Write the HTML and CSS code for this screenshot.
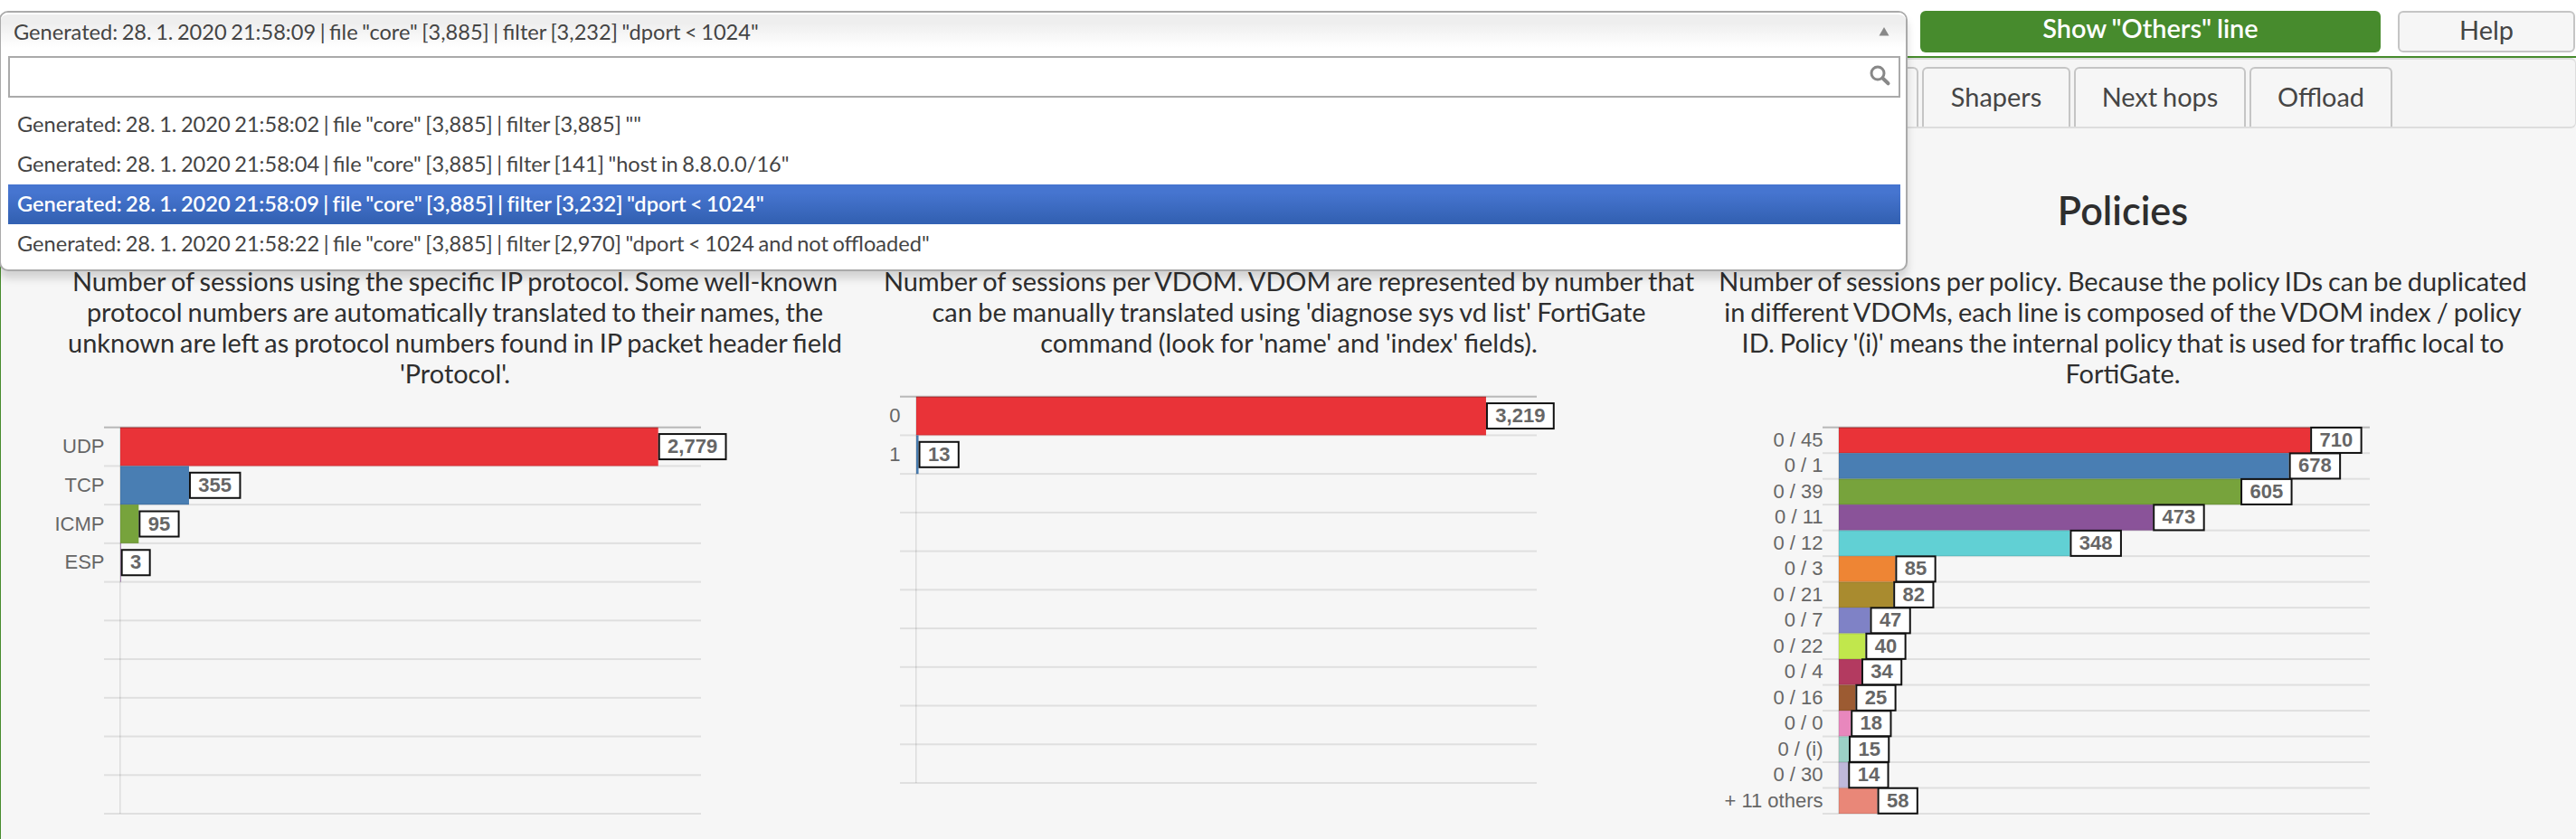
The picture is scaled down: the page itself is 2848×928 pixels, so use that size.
FILE: index.html
```html
<!DOCTYPE html>
<html lang="en">
<head>
<meta charset="utf-8">
<title>Session statistics</title>
<link rel="stylesheet" href="styles.css">
</head>
<body>
<header class="toolbar">
  <div class="chooser">
    <div class="chooser-head"><span>Generated: 28. 1. 2020 21:58:09 | file "core" [3,885] | filter [3,232] "dport &lt; 1024"</span>
      <svg class="arrow" width="12" height="10" viewBox="0 0 12 10"><path d="M0.5 9.5 L6 0 L11.5 9.5Z" fill="#888"/></svg>
    </div>
    <div class="chooser-drop">
      <div class="search">
        <svg width="24" height="24" viewBox="0 0 24 24" fill="none" stroke="#888"><circle cx="9" cy="9" r="7" stroke-width="3"/><path d="M14.5 14.5 L20.5 20.3" stroke-width="4" stroke-linecap="round"/></svg>
      </div>
      <ul class="results">
        <li>Generated: 28. 1. 2020 21:58:02 | file "core" [3,885] | filter [3,885] ""</li>
        <li>Generated: 28. 1. 2020 21:58:04 | file "core" [3,885] | filter [141] "host in 8.8.0.0/16"</li>
        <li class="active">Generated: 28. 1. 2020 21:58:09 | file "core" [3,885] | filter [3,232] "dport &lt; 1024"</li>
        <li>Generated: 28. 1. 2020 21:58:22 | file "core" [3,885] | filter [2,970] "dport &lt; 1024 and not offloaded"</li>
      </ul>
    </div>
  </div>
  <div class="btn btn-primary">Show "Others" line</div>
  <div class="btn btn-help">Help</div>
</header>
<main class="panel">
  <nav class="tabs">
    <span class="tab tab-rest"></span>
    <span class="tab tab-shapers">Shapers</span>
    <span class="tab tab-hops">Next hops</span>
    <span class="tab tab-offload">Offload</span>
  </nav>
  <div class="columns">
    <section class="column">
      <h2></h2>
      <p>Number of sessions using the specific IP protocol. Some well-known<br>protocol numbers are automatically translated to their names, the<br>unknown are left as protocol numbers found in IP packet header field<br>'Protocol'.</p>
      <svg class="chart" id="protocols"></svg>
    </section>
    <section class="column column-vdoms">
      <h2></h2>
      <p>Number of sessions per VDOM. VDOM are represented by number that<br>can be manually translated using 'diagnose sys vd list' FortiGate<br>command (look for 'name' and 'index' fields).</p>
      <svg class="chart" id="vdoms"></svg>
    </section>
    <section class="column">
      <h2>Policies</h2>
      <p>Number of sessions per policy. Because the policy IDs can be duplicated<br>in different VDOMs, each line is composed of the VDOM index / policy<br>ID. Policy '(i)' means the internal policy that is used for traffic local to<br>FortiGate.</p>
      <svg class="chart" id="policies"></svg>
    </section>
  </div>
</main>
<script src="charts.js"></script>
</body>
</html>
```
FILE: styles.css
```css
* { box-sizing: border-box; }
body {
  margin: 0;
  width: 2848px;
  height: 928px;
  overflow: hidden;
  background: #fff;
  color: #2e2e2e;
  font-family: Lato, sans-serif;
  font-size: 28.9px;
  word-spacing: -1.4px;
}
.toolbar {
  position: relative;
  display: flex;
  height: 62px;
  padding: 12px 1px 0 2123px;
}
.chooser {
  position: absolute;
  z-index: 2;
  left: -1px;
  top: 12px;
  width: 2110px;
  height: 288px;
  border: 2px solid #aaa;
  border-radius: 10px;
  background: #fff;
  box-shadow: 0 8px 10px rgba(0, 0, 0, .15);
  color: #444;
  font-size: 23.6px;
  word-spacing: -1.5px;
}
.chooser-head {
  display: flex;
  align-items: center;
  justify-content: space-between;
  height: 48px;
  padding: 0 18px 9px 14px;
  border-top: 2px solid #fff;
  border-radius: 8px 8px 0 0;
  background: linear-gradient(#eee 20%, #fff 80%);
}
.search {
  display: flex;
  justify-content: flex-end;
  height: 46px;
  margin: 0 6px 0 8px;
  padding: 8px 8px 0 0;
  border: 2px solid #aaa;
  background: #fff;
}
.results {
  margin: 8px 6px 0 8px;
  padding: 0;
  list-style: none;
}
.results li {
  height: 44px;
  padding-left: 10px;
  line-height: 43px;
}
.results .active {
  background: linear-gradient(#4675d0 20%, #3462b4 90%);
  color: #fff;
  font-weight: 600;
  letter-spacing: -.02px;
  font-variant-ligatures: common-ligatures;
}
.btn {
  height: 46px;
  border-radius: 6px;
  text-align: center;
  line-height: 37px;
}
.btn-primary {
  width: 509px;
  margin-right: 19px;
  background: #478b2d;
  color: #fff;
  font-weight: 600;
}
.btn-help {
  width: 196px;
  border: 2px solid #c5c5c5;
  background: #f6f6f6;
  color: #454545;
}
.panel {
  height: 866px;
  border-top: 2px solid #478b2d;
  border-left: 1px solid #478b2d;
  background: #f6f6f6;
}
.tabs {
  display: flex;
  height: 78px;
  gap: 4px;
  padding-top: 8px;
  border: solid #ddd;
  border-width: 2px 1px 2px 0;
  border-radius: 0 6px 6px 0;
  background: #f5f5f5;
}
.tab {
  height: 66px;
  border: 2px solid #c5c5c5;
  border-bottom: 0;
  border-radius: 6px 6px 0 0;
  background: #f6f6f6;
  color: #454545;
  text-align: center;
  line-height: 61px;
}
.tab-rest { width: 2120px; }
.tab-shapers { width: 164px; }
.tab-hops { width: 190px; }
.tab-offload { width: 158px; }
.columns {
  display: flex;
  padding-left: 41px;
}
.column {
  width: 922px;
  text-align: center;
}
.column-vdoms { word-spacing: -1px; }
.column h2 {
  height: 50px;
  margin: 65px 0 37px;
  font-size: 43.2px;
  font-weight: 600;
  line-height: 50px;
}
.column p {
  margin: 0 0 33px;
  line-height: 34px;
  white-space: nowrap;
}
.chart {
  display: block;
  width: 922px;
  height: 450px;
}
.chart text {
  fill: #666;
  font-family: "Liberation Sans", Arial, sans-serif;
  font-size: 22px;
  word-spacing: 0;
}
.chart .tick { text-anchor: end; }
.chart .value { font-weight: 700; text-anchor: middle; }
```
FILE: charts.js
```js
const COLORS = ['#e93338', '#497eb3', '#77a33c', '#8a5399', '#61d0d4', '#ee8534', '#a98b2f', '#7f82c6',
  '#c1e74c', '#b33a60', '#9c5b32', '#e887bd', '#9bd0c6', '#bfb8da', '#e98778'];

// Horizontal bar chart: axis = x of the zero line, scale = pixels per session, rows = number of slots.
function drawChart(id, axis, right, scale, rows, data) {
  const top = 9.7, height = 427.3, step = height / rows;
  let out = '';
  data.forEach(([, n], i) => {
    out += `<rect x="${axis}" y="${top + i * step}" width="${n * scale}" height="${step}" fill="${COLORS[i]}"/>`;
  });
  for (let i = 0; i <= rows; i++) {
    const y = top + i * step - 1;
    out += `<rect x="${axis - 18}" y="${y}" width="${right - axis + 18}" height="2" fill="#000" fill-opacity="${i ? 0.09 : 0.25}"/>`;
  }
  out += `<rect x="${axis - 1}" y="${top}" width="1.5" height="${height}" fill="#000" fill-opacity="0.1"/>`;
  data.forEach(([name, n], i) => {
    const mid = top + (i + 0.5) * step, label = n.toLocaleString('en-US');
    const textWidth = label.replace(',', '').length * 12.23 + (label.includes(',') ? 6.1 : 0);
    const x = axis + n * scale, w = textWidth + 18.8;
    out += `<text class="tick" x="${axis - 17.5}" y="${mid + 7}">${name}</text>`;
    out += `<rect x="${x + 1}" y="${mid - 14}" width="${w}" height="28" fill="#fff" stroke="#111" stroke-width="2"/>`;
    out += `<text class="value" x="${x + 1 + w / 2}" y="${mid + 7}">${label}</text>`;
  });
  document.getElementById(id).innerHTML = out;
}

drawChart('protocols', 91, 733, 0.214, 10, [['UDP', 2779], ['TCP', 355], ['ICMP', 95], ['ESP', 3]]);
drawChart('vdoms', 49, 735, 0.1957, 10, [['0', 3219], ['1', 13]]);
drawChart('policies', 147, 734, 0.734, 15, [['0 / 45', 710], ['0 / 1', 678], ['0 / 39', 605], ['0 / 11', 473],
  ['0 / 12', 348], ['0 / 3', 85], ['0 / 21', 82], ['0 / 7', 47], ['0 / 22', 40], ['0 / 4', 34], ['0 / 16', 25],
  ['0 / 0', 18], ['0 / (i)', 15], ['0 / 30', 14], ['+ 11 others', 58]]);
```
